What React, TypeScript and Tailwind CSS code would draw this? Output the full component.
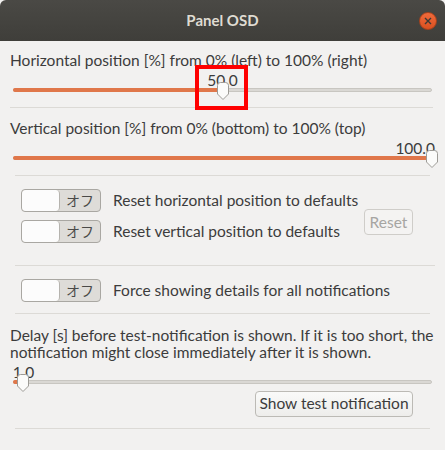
import React from "react";

const font = { fontFamily: "Lato, 'Noto Sans CJK JP', sans-serif" };

function Thumb() {
  return (
    <svg width="14" height="18" viewBox="0 0 14 18" className="block">
      <path
        d="M1.5 3.5 Q1.5 0.5 4.5 0.5 H9.5 Q12.5 0.5 12.5 3.5 V12 L7 17.5 L1.5 12 Z"
        fill="#fbfbfa"
        stroke="#9d9b96"
      />
    </svg>
  );
}

type SliderProps = {
  frac: number;
  label: string;
  labelAlign?: "center" | "right";
};

const Slider = ({ frac, label, labelAlign = "center" }: SliderProps) => {
  const pct = frac * 100;
  return (
    <div className="relative h-[31px] mx-[3px]">
      {labelAlign === "center" ? (
        <span
          className="absolute top-[2px] -translate-x-1/2 text-[15.5px] leading-[18px] text-[#3c3c3c]"
          style={{ left: `${pct}%` }}
        >
          {label}
        </span>
      ) : (
        <span className="absolute top-[2px] right-[-3px] text-[15.5px] leading-[18px] text-[#3c3c3c]">
          {label}
        </span>
      )}
      <div className="absolute top-[19px] left-0 right-0 h-[4px] rounded-full bg-[#dad8d4] border border-[#c8c6c1]" />
      <div
        className="absolute top-[19px] left-0 h-[4px] rounded-full bg-[#e0774a]"
        style={{ width: `${pct}%` }}
      />
      <div className="absolute top-[13px] -translate-x-1/2" style={{ left: `${pct}%` }}>
        <Thumb />
      </div>
    </div>
  );
};

const Toggle = () => (
  <div className="flex w-[80px] h-[23px] rounded-[4px] border border-[#a9a7a2] bg-[#dedcd8] overflow-hidden shrink-0">
    <div className="w-[38px] h-full rounded-[4px] bg-[#fcfcfc] border-r border-[#b5b3ae]" />
    <div className="flex-1 flex items-center justify-center text-[14px] text-[#4a4a48]">オフ</div>
  </div>
);

const Sep = ({ className }: { className: string }) => (
  <div className={`h-px bg-[#dcdad6] ${className}`} />
);

export default function App() {
  return (
    <div className="w-[445px] h-[450px] bg-[#f2f1f0] overflow-hidden" style={font}>
      <div className="relative h-[41px] rounded-t-[6px] bg-gradient-to-b from-[#4a4945] to-[#3f3e3a] flex items-center justify-center">
        <span className="text-[15px] font-bold text-[#dfdbd2]">Panel OSD</span>
        <div className="absolute right-[8px] top-[12px] w-[18px] h-[18px] rounded-full bg-gradient-to-b from-[#f06a3b] to-[#d9501f] border border-[#a8421c] flex items-center justify-center">
          <svg width="8" height="8" viewBox="0 0 8 8">
            <path d="M1 1 L7 7 M7 1 L1 7" stroke="#3b3a36" strokeWidth="1.4" />
          </svg>
        </div>
      </div>

      <div className="px-[10px] text-[#3c3c3c] text-[15.5px]">
        <div className="mt-[10px] leading-[18px]">
          Horizontal position [%] from 0% (left) to 100% (right)
        </div>
        <Slider frac={0.5} label="50.0" />
        <Sep className="mt-[7px] mr-[2px]" />

        <div className="mt-[11px] leading-[18px]">
          Vertical position [%] from 0% (bottom) to 100% (top)
        </div>
        <Slider frac={1} label="100.0" labelAlign="right" />
        <Sep className="mt-[7px] ml-[5px] mr-[5px]" />

        <div className="flex items-center mt-[13px] pl-[11px] pr-[22px]">
          <div className="flex flex-col gap-[8px]">
            <div className="flex items-center gap-[12px]">
              <Toggle />
              <span>Reset horizontal position to defaults</span>
            </div>
            <div className="flex items-center gap-[12px]">
              <Toggle />
              <span>Reset vertical position to defaults</span>
            </div>
          </div>
          <button className="ml-auto mt-[12px] w-[49px] h-[26px] rounded-[4px] border border-[#cfcdc9] bg-[#f4f3f2] text-[#a6a5a2] text-[15.5px]">
            Reset
          </button>
        </div>
        <Sep className="mt-[21px] ml-[5px]" />

        <div className="flex items-center gap-[12px] mt-[13px] pl-[11px]">
          <Toggle />
          <span>Force showing details for all notifications</span>
        </div>
        <Sep className="mt-[11px] ml-[5px] mr-[5px]" />

        <div className="mt-[13px] leading-[17px]">
          Delay [s] before test-notification is shown. If it is too short, the notification might
          close immediately after it is shown.
        </div>
        <Slider frac={0.025} label="1.0" />
        <div className="flex justify-end mr-[22px] -mt-[1px]">
          <button className="w-[158px] h-[26px] rounded-[4px] border border-[#bcbab5] bg-gradient-to-b from-[#fafaf9] to-[#eeedeb] text-[15.5px] text-[#3c3c3c]">
            Show test notification
          </button>
        </div>
        <Sep className="mt-[11px] ml-[5px] mr-[5px]" />
      </div>

      <div className="absolute left-[195px] top-[65px] w-[53px] h-[45px] border-[4px] border-[#ff0000]" />
    </div>
  );
}
